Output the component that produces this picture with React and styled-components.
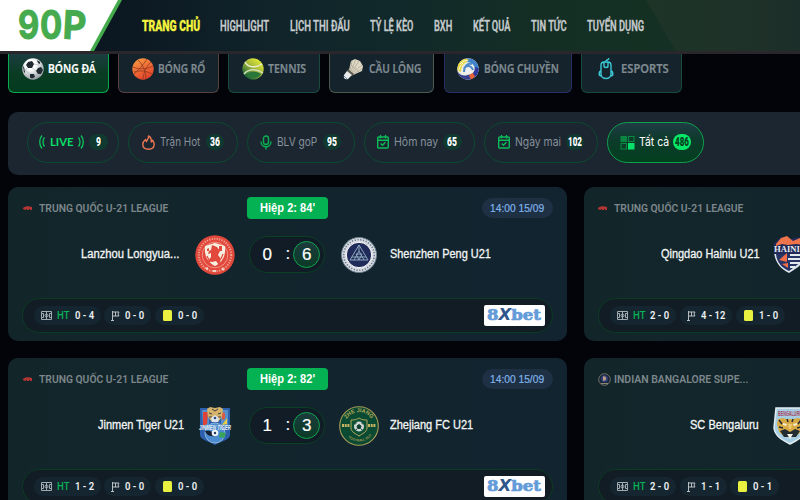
import React, { useLayoutEffect, useRef } from 'react'
import styled, { createGlobalStyle } from 'styled-components'

const GlobalStyle = createGlobalStyle`
    * { box-sizing: border-box; }
    html, body { margin: 0; background: #03040a; }
    body { font-family: "Liberation Sans", Arial, sans-serif; }
    svg { display: block; flex: none; }
`

const Page = styled.div`
    width: 800px;
    height: 500px;
    overflow: hidden;
`

const NAV = [
    ['TRANG CHỦ', 58], ['HIGHLIGHT', 49], ['LỊCH THI ĐẤU', 60], ['TỶ LỆ KÈO', 43.5],
    ['BXH', 18.5], ['KẾT QUẢ', 37.5], ['TIN TỨC', 35.5], ['TUYỂN DỤNG', 57.5]]

// Squeezes a label horizontally to the given width
const Fit = ({ w, children }) => {
    const ref = useRef(null)
    useLayoutEffect(() => {
        ref.current.style.transform = `scaleX(${w / ref.current.offsetWidth})`
    }, [w, children])
    return <FitBox $w={w}><FitText ref={ref}>{children}</FitText></FitBox>
}

const FitBox = styled.span`
    display: block;
    flex: none;
    width: ${(p) => p.$w}px;
    white-space: nowrap;
`

const FitText = styled.span`
    display: inline-block;
    transform-origin: 0 50%;
`

/* ---------- header ---------- */

const Header = styled.header`
    display: flex;
    height: 54px;
    border-bottom: 3px solid #29272b;
    background: linear-gradient(90deg, #0b1620 100px, #10242a 270px, #11292a 400px, #142e24 540px, #143023 640px, #182e26 800px);
    position: relative;
    overflow: hidden;
`

const Slant = styled.div`
    position: absolute;
    inset: 0 0 0 646px;
    background: linear-gradient(90deg, #1d3427, #1f3229 60%, #1c2e29);
    clip-path: polygon(0 0, 100% 0, 100% 100%, 30px 100%);
`

const LogoEdge = styled.div`
    width: 122px;
    height: 51px;
    flex: none;
    background: #43ab4b;
    clip-path: polygon(0 0, 100% 0, 94px 100%, 0 100%);
`

const Logo = styled.div`
    width: 118px;
    height: 51px;
    padding-left: 18px;
    background: #fff;
    clip-path: polygon(0 0, 100% 0, 90px 100%, 0 100%);
    color: #46ab4e;
    display: flex;
    gap: 1px;
    font: 700 39px/50px Inter, sans-serif;
    -webkit-text-stroke: 1px #46ab4e;
`

const LogoP = styled.span`
    transform: rotate(3deg);
`

const Nav = styled.nav`
    display: flex;
    gap: 20.4px;
    padding-left: 20px;
    font: 600 15px/52px Roboto, sans-serif;
    color: #c6cbcd;
    -webkit-text-stroke: 0.3px currentColor;
    z-index: 1;
`

const NavItem = styled.a`
    color: ${(p) => p.$active ? '#f4f33e' : 'inherit'};
    font-weight: ${(p) => p.$active ? 900 : 600};
`

/* ---------- sports ---------- */

const Sports = styled.div`
    display: flex;
    gap: 9.2px;
    height: 39px;
    padding-left: 8.4px;
`

const SportCard = styled.div`
    width: ${(p) => p.$w}px;
    height: 39px;
    flex: none;
    display: flex;
    align-items: center;
    gap: 4.5px;
    padding: 0 0 9px 12.5px;
    border: 1px solid ${(p) => p.$line};
    border-top: 0;
    border-radius: 0 0 6px 6px;
    background: ${(p) => p.$active ? 'linear-gradient(#1c3c40, #0a3c24 50%, #033b1d)' : '#15232d'};
    color: ${(p) => p.$active ? '#fff' : '#7f8b91'};
    font: 600 12px/16px "Noto Sans", sans-serif;
    -webkit-text-stroke: 0.2px currentColor;
`

const Soccer = () => (
    <svg width="22" height="22" viewBox="0 0 22 22">
        <defs><radialGradient id="sg" cx=".4" cy=".3" r=".75"><stop offset=".3" stopColor="#fff" /><stop offset="1" stopColor="#8b949b" /></radialGradient></defs>
        <circle cx="11" cy="11" r="10.7" fill="url(#sg)" />
        <path d="M6 4l4-1 2 3-2 4-4 0-2-3zM1 8l1 1 1 5-1 1zM16 10l3-1 2 3-2 4-3 0-2-3zM15 2l3 2 0 2-2-1zM8 16l4 0 1 3-3 1.500-2-1z" fill="#202a30" />
        <path d="M10 10l4 3M5 10l-2 3M12 6l5 1M8 16l-4-3M13 19l4-3" stroke="#aab2b8" strokeWidth=".6" />
    </svg>
)

const Basket = () => (
    <svg width="22" height="22" viewBox="0 0 22 22">
        <defs><linearGradient id="bg" x2=".5" y2="1"><stop stopColor="#f9a044" /><stop offset="1" stopColor="#e5452b" /></linearGradient></defs>
        <circle cx="11" cy="11" r="10.7" fill="url(#bg)" />
        <path d="M1 9c7 3 14 2 20-1M6 2c5 5 8 11 8 19M15 1c-4 6-8 11-13 15M19 4c-5 5-7 9-8 17M2 14c6-2 13-1 18 2" stroke="#8f3a22" strokeWidth=".8" fill="none" />
    </svg>
)

const Tennis = () => (
    <svg width="22" height="22" viewBox="0 0 22 22">
        <defs><linearGradient id="tg" x1=".85" x2=".15" y2=".9"><stop stopColor="#eef436" /><stop offset=".45" stopColor="#a9bb3b" /><stop offset="1" stopColor="#0e5c35" /></linearGradient></defs>
        <circle cx="11" cy="11" r="10.7" fill="url(#tg)" />
        <path d="M3 4c3 6 11 6 17 2" stroke="#e8ecd0" strokeWidth="1.500" fill="none" />
        <path d="M2 16c5-6 13-5 19-1" stroke="#d5dfb8" strokeWidth="1.500" fill="none" />
        <path d="M5 16c4-3 9-3 14 0-3 5-10 5-14 0z" fill="#287638" />
    </svg>
)

const Shuttle = () => (
    <svg width="22" height="22" viewBox="0 0 22 22">
        <path d="M7 12L9 3l4-2 5 2 3 5-1 5-9 4z" fill="#ded8c4" />
        <path d="M8 13L10 3M9 13l5-12M10 14l7-11M10 15l10-8M11 16l9-5M9 7l8 7" stroke="#a39b87" strokeWidth=".6" />
        <path d="M6 11l6 5-2 2-5-5z" fill="#5b5a4e" />
        <path d="M5 13l5 4-4 4c-3 1-5-1-4-4z" fill="#e8ebe9" />
        <path d="M2 18c1 1 2 2 3 3" stroke="#668cae" />
    </svg>
)

const Volley = () => (
    <svg width="22" height="22" viewBox="0 0 22 22">
        <defs><clipPath id="vc"><circle cx="11" cy="11" r="10.7" /></clipPath></defs>
        <g clipPath="url(#vc)">
            <path d="M0 0h22v22H0z" fill="#eceee3" />
            <path d="M10 0c8 0 12 5 12 12l-4 1c0-6-3-9-9-9z" fill="#3f82cd" />
            <path d="M22 10c0 7-4 10-8 12l-4-5c5 0 8-3 8-8z" fill="#303a9c" />
            <path d="M1 14c3 4 6 4 10 3l3 5H6C2 20 0 17 0 14z" fill="#353e91" />
            <path d="M1 5c4-4 8-5 11-3L8 5C5 7 4 10 4 14L0 12z" fill="#e8d83b" />
            <path d="M3 6c3-3 5-4 8-3M2 12c0-3 2-5 4-7" stroke="#f6f4d8" fill="none" />
            <path d="M8 7c3-2 8 0 8 5l-5 4C7 15 6 10 8 7z" fill="#edf0ef" />
            <path d="M15 6c-5-1-8 2-8 8M16 12c-2-5-6-5-9-2" stroke="#4f89c8" strokeWidth="2" fill="none" />
            <path d="M12 17l4-2 2 4-4 3z" fill="#ec6431" />
        </g>
    </svg>
)

const Mouse = () => (
    <svg width="22" height="22" viewBox="0 0 22 22" fill="none" stroke="#3cc9d6" strokeWidth="1.400">
        <path d="M11 4.500V3c0-1.500 2.500-.5 3-2.800M9 4h4c2 0 3 1.500 3 3.500V16c0 6-10 6-10 0V7.500C6 5.500 7 4 9 4zM9 4.500V8c0 2 4 2 4 0V4.500M6 13c-1.500 0-1.800 1-1.800 3 0 1.500.8 2 2.300 2M16 13c1.500 0 1.800 1 1.800 3 0 1.500-.8 2-2.300 2" />
    </svg>
)

/* ---------- filters ---------- */

const Filters = styled.div`
    display: flex;
    gap: 9px;
    width: 820px;
    height: 62.500px;
    margin: 19px 0 0 8.4px;
    padding: 9.5px 0 0 18.6px;
    border-radius: 10px;
    background: #1b2631;
`

const Pill = styled.div`
    width: ${(p) => p.$w}px;
    height: 41.5px;
    flex: none;
    display: flex;
    align-items: center;
    justify-content: center;
    gap: ${(p) => p.$active ? 4 : 5}px;
    border: 1px solid ${(p) => p.$active ? '#0fa24d' : '#0c4a2f'};
    border-radius: 21px;
    background: ${(p) => p.$active ? 'linear-gradient(#203b45, #0c3b2a 45%, #033f1f)' : 'transparent'};
    color: ${(p) => p.$active ? '#fff' : '#87919a'};
    font: 400 11.5px/16px Inter, sans-serif;
`

const LiveText = styled.span`
    color: #08df66;
    font: 700 12px/16px Lato, sans-serif;
`

const Count = styled.span`
    width: 18.500px;
    height: 16px;
    display: flex;
    justify-content: center;
    border-radius: 8px;
    background: ${(p) => p.$active ? '#05e868' : '#103a30'};
    color: ${(p) => p.$active ? '#06401f' : '#fff'};
    font: 900 12px/16px Roboto, sans-serif;
`

const Waves = ({ flip }) => (
    <svg width="6" height="14" viewBox="0 0 6 14" fill="none" stroke="#0bc75b" strokeWidth="1.300" transform={flip ? 'scale(-1 1)' : undefined}>
        <path d="M3 .5C0 4 0 10 3 13.500M5.500 2.500C3.500 5 3.500 9 5.500 11.500" />
    </svg>
)

const Flame = () => (
    <svg width="13" height="15" viewBox="0 0 13 15" fill="none" stroke="#ed7650" strokeWidth="1.400" strokeLinejoin="round">
        <path d="M6.500 1C7 4 5 4.500 4.500 6.500 4 6 3.500 5.500 3.500 4.500 1.500 6 .8 8 .8 9.500c0 3 2.500 4.700 5.700 4.700s5.700-1.700 5.700-4.900c0-1.800-.8-2.800-1.700-4.100-.2 1-.7 1.500-1.200 1.800C9.500 4.500 8.500 2 6.500 1z" />
    </svg>
)

const Mic = () => (
    <svg width="12" height="15" viewBox="0 0 12 15" fill="none" stroke="#0bae52" strokeWidth="1.400">
        <rect x="3.500" y="1" width="5" height="8.500" rx="2.500" />
        <path d="M1 6.500c0 7 10 7 10 0M6 11.500V14.500" />
    </svg>
)

const Cal = () => (
    <svg width="12" height="14" viewBox="0 0 12 14" fill="none" stroke="#0dba59" strokeWidth="1.400">
        <rect x=".7" y="2" width="10.600" height="11" rx="1" />
        <path d="M1 5.200h10M3.500 0v3.500M8.500 0v3.500M3.700 8.500l1.700 1.700 3-3" />
    </svg>
)

const Tiles = () => (
    <svg width="15" height="15" viewBox="0 0 15 15">
        <rect x=".5" y="1" width="6.500" height="6" fill="#0b8541" />
        <rect x="8.500" y="1.500" width="5.500" height="5" fill="none" stroke="#0a8b44" />
        <rect x="1" y="8.500" width="5.500" height="5.500" fill="none" stroke="#0a8b44" />
        <rect x="8" y="8" width="6.500" height="6.500" fill="#08e169" />
    </svg>
)

/* ---------- match cards ---------- */

const Matches = styled.main`
    display: grid;
    grid-template-columns: 558.3px 558.3px;
    gap: 17px;
    padding: 12.800px 0 0 8.4px;
`

const MatchCard = styled.section`
    height: 154px;
    display: flex;
    flex-direction: column;
    padding: 10px 14px 0;
    border-radius: 10px;
    background: linear-gradient(90deg, #12262a, #122430 100%);
`

const CardTop = styled.div`
    height: 22px;
    display: flex;
    align-items: center;
`

const League = styled.div`
    width: 225px;
    display: flex;
    align-items: center;
    gap: ${(p) => p.$gap}px;
    padding-top: 1px;
    color: #7d878b;
    font: 600 10.500px/14px Roboto, sans-serif;
`

const Period = styled.div`
    width: 81px;
    height: 22px;
    display: flex;
    justify-content: center;
    border-radius: 4px;
    background: #05b253;
    color: #fff;
    font: 700 12px/22px "Liberation Sans", sans-serif;
`

const Kickoff = styled.div`
    width: 71px;
    height: 20px;
    display: flex;
    justify-content: center;
    margin-left: auto;
    border-radius: 10px;
    background: #1e3043;
    color: #80b3ea;
    font: 400 11px/21px "Liberation Sans", sans-serif;
    -webkit-text-stroke: 0.2px currentColor;
`

const Teams = styled.div`
    height: 40px;
    display: flex;
    align-items: center;
    margin-top: 15.500px;
    color: #f3f5f5;
    font: 400 12px/19px "Liberation Sans", sans-serif;
    -webkit-text-stroke: 0.3px currentColor;
    svg { -webkit-text-stroke: 0; }
`

const HomeName = styled.div`
    width: 172.800px;
    display: flex;
    justify-content: flex-end;
    padding-right: ${(p) => p.$pad}px;
`

const AwayName = styled.div`
    padding-left: 11px;
`

const Score = styled.div`
    width: 76px;
    height: 37px;
    display: flex;
    align-items: center;
    margin: 0 14px 0 14px;
    padding: 0 4px 0 8px;
    border: 1px solid #0b4025;
    border-radius: 19px;
    background: #111c26;
    color: #fff;
    font: 400 17px/26px "Liberation Sans", sans-serif;
    -webkit-text-stroke: 0.2px currentColor;
`

const Goals = styled.span`
    width: 18px;
    text-align: center;
`

const Colon = styled.span`
    text-align: right;
    margin-right: 3px;
    padding-bottom: 2px;
    flex: 1;
`

const Winner = styled.span`
    width: 27px;
    height: 27px;
    flex: none;
    border: 1px solid #0ea74f;
    border-radius: 50%;
    background: linear-gradient(#1b3c3c, #0b3b27);
    text-align: center;
    line-height: 26px;
`

const CardFoot = styled.div`
    height: 35px;
    display: flex;
    align-items: center;
    gap: 3.5px;
    margin-top: 23.300px;
    padding: 0 7px 0 11px;
    border: 1px solid #0c3b23;
    border-radius: 18px;
    background: #111c25;
`

const Chip = styled.div`
    height: 19.5px;
    display: flex;
    align-items: center;
    gap: 5px;
    padding: 0 7px;
    border-radius: 10px;
    background: #162631;
    color: #eef1f2;
    font: 600 10px/19px Roboto, sans-serif;
`

const HalfTime = styled.span`
    color: #08b354;
    font-weight: 500;
`

const YellowCard = styled.i`
    width: 9px;
    height: 11px;
    margin: 0 1px;
    border-radius: 1.500px;
    background: #eaf03f;
`

const Sponsor = styled.div`
    width: 61px;
    height: 21px;
    display: flex;
    justify-content: center;
    margin-left: auto;
    border-radius: 2px;
    background: #fff;
    color: #629bd8;
    font: 700 15px/21px "DejaVu Serif", serif;
    -webkit-text-stroke: 0.7px currentColor;
    b { color: #2f578b; font-family: "DejaVu Sans", sans-serif; font-style: italic; -webkit-text-stroke: 0; }
`

const Pitch = () => (
    <svg width="11" height="9" viewBox="0 0 11 9" fill="none" stroke="#a1aaae" strokeWidth="1">
        <path d="M.5.5h10v8H.5zM5.500.5v8M.5 2.500h2v4h-2M10.500 2.500h-2v4h2" /><circle cx="5.500" cy="4.500" r="1.500" />
    </svg>
)

const Flag = () => (
    <svg width="9" height="10" viewBox="0 0 9 10" fill="none" stroke="#b9c0c4" strokeWidth="1">
        <path d="M1.500 0v9M0 9.500h3M1.500 1H8L7 3l1 2H1.500M4.500 1v4" />
    </svg>
)

const ChinaMark = () => (
    <svg width="9" height="5" viewBox="0 0 9 5">
        <path d="M0 2c2-2 6-2 9-1v3H7V3H6v1H4V3L2 4 0 3z" fill="#b33634" />
    </svg>
)

const IndiaMark = () => (
    <svg width="13" height="13" viewBox="0 0 13 13">
        <circle cx="6.500" cy="6.500" r="5.800" fill="#17253b" stroke="#747064" strokeWidth="1" />
        <circle cx="6.500" cy="5.800" r="3.500" fill="#313f74" /><path d="M5 3l3 1 0 3-3 1z" fill="#b79b88" />
        <path d="M3 10.500h7" stroke="#8c8876" />
    </svg>
)

const Lanzhou = () => (
    <svg width="40" height="40" viewBox="0 0 40 40">
        <circle cx="20" cy="20" r="19.700" fill="#e2483b" />
        <circle cx="20" cy="20" r="16.200" fill="none" stroke="#efa493" strokeWidth="2" strokeDasharray="1.200 1.300" />
        <circle cx="20" cy="20" r="12.800" fill="#e2483b" stroke="#f2b3a4" strokeWidth=".7" />
        <path d="M10 11l10-3 10 3c1 9-2 16-10 20C12 27 9 20 10 11z" fill="#f5f0df" />
        <path d="M17 10l5 2 3 4-2 4 3 4-2 6-3-4-4 1-4-1 3-4 0-4-3 1 1-3 2-1zM24 11h3v5h-3zM12 14l2-1 0 3-2 0z" fill="#e2483b" />
        <path d="M12 21l3 6M28 19l-2 5" stroke="#e2483b" strokeWidth="1.200" fill="none" />
        <path d="M11 34l2-1M18 36h3M27 33l2 2" stroke="#f2d4c4" strokeWidth="2" />
    </svg>
)

const Shenzhen = () => (
    <svg width="40" height="40" viewBox="0 0 40 40">
        <circle cx="20" cy="20" r="17.500" fill="#d9dde1" stroke="#6c7e8d" />
        <circle cx="20" cy="20" r="15.300" fill="none" stroke="#6b7a92" strokeWidth="1.600" strokeDasharray="1.300 1.500" />
        <circle cx="20" cy="20" r="12.700" fill="#202b59" stroke="#fff" />
        <path d="M20 10l9 15H11zM20 10v6l-5 9M20 16l5 9M13 22h14M17 19l3 6 3-6z" fill="none" stroke="#8ba6bd" strokeWidth="1" />
    </svg>
)

const Jinmen = () => (
    <svg width="40" height="40" viewBox="0 0 40 40">
        <path d="M5 2h30v27c0 5-9 6-15 10C14 35 5 34 5 29z" fill="#2c60ad" />
        <path d="M7 4h7v18H8zM26 4h7v18l-7-3z" fill="#5590cc" />
        <path d="M8 6l5 0-1 12-4 2z" fill="#df4239" /><path d="M32 12l0 6-5 1z" fill="#e9ce3f" /><path d="M27 6l3 1 0 6-3 1z" fill="#d95a43" />
        <path d="M12 3l3-2 5 1 5-1 3 2-1 8-4 5h-6l-4-5z" fill="#d5b36a" />
        <path d="M14 7l3 1M26 7l-3 1M17 3l3 2 3-2M14 11l3 0M26 11l-3 0" stroke="#413d43" strokeWidth="1" fill="none" />
        <path d="M16 12l4-3 4 3-1 4h-6z" fill="#dfe6ee" /><circle cx="20" cy="12" r="1.300" fill="#314c7d" />
        <circle cx="20" cy="27" r="10" fill="#4b8cd0" stroke="#a5c4e0" strokeWidth=".8" />
        <path d="M10 25c6-1 9 2 12 5-5 1-10 0-12-5z" fill="#151e32" />
        <path d="M25 26l6 1-2 5-5-1z" fill="#39a35a" /><circle cx="20" cy="27" r="3.300" fill="#eef4fa" /><circle cx="20" cy="27" r="1.200" fill="#263a65" />
        <text x="4" y="24" textLength="32" lengthAdjust="spacingAndGlyphs" fill="#e9ecf0" fontFamily="Liberation Sans" fontSize="7.500" fontStyle="italic" fontWeight="700">JINMEN TIGER</text>
    </svg>
)

const Zhejiang = () => (
    <svg width="40" height="40" viewBox="0 0 40 40">
        <defs><path id="zt" d="M7 14C13 3.500 27 3.500 33 14" /><path id="zb" d="M7 28c5 10 21 10 26 0" /></defs>
        <circle cx="20" cy="20" r="19.300" fill="#0b4a32" stroke="#a99b58" strokeWidth="1.100" />
        <text fill="#b4a75a" fontFamily="Liberation Sans" fontSize="5.500" fontWeight="700"><textPath href="#zt" startOffset="1">ZHE JIANG</textPath></text>
        <text fill="#a79b56" fontFamily="Liberation Sans" fontSize="3.400" fontWeight="700"><textPath href="#zb" startOffset="4">FOOTBALL CLUB</textPath></text>
        <path d="M3 19.500h8M29 19.500h8" stroke="#c4b361" strokeWidth="3" strokeDasharray="2 .7" />
        <path d="M12 14c5 0 6-1 8-2 2 1 3 2 8 2v8c0 4-5 6-8 8-3-2-8-4-8-8z" fill="#0c5035" stroke="#b7aa5a" />
        <circle cx="20" cy="20.500" r="5" fill="#cfd8d4" />
        <path d="M20 18.500l2 1.500-.7 2.500h-2.600L18 20zM16 18.500l1.500-2M24 18.500l-1.500-2M16.500 24l1.500-1M23.500 24l-1.500-1" fill="#123f31" stroke="#123f31" />
    </svg>
)

const Qingdao = () => (
    <svg width="40" height="40" viewBox="0 0 40 40">
        <path d="M4 17l32 0c0 11-9 16-17 21C11 34 5 28 4 17z" fill="#dce4ed" />
        <path d="M4 8l7-6 9 2 9-2 7 7-1 10H4z" fill="#202957" />
        <path d="M6 9l5-6 6-2 6 5 7-3 4 7-8-1-8 1-6-1-6 2z" fill="#ee744b" />
        <path d="M6 19h27l-2 8-12 9C12 33 7 28 6 19z" fill="#253365" />
        <path d="M9 25l8-7v9zM12 29l6-1v5z" fill="#ef6d48" />
        <path d="M20 20h12M18 24h13M20 28h10M20 32h5" stroke="#e3e8ed" strokeWidth="2" />
        <text x="4" y="17" textLength="32" lengthAdjust="spacingAndGlyphs" fill="#e8edf1" fontFamily="Liberation Serif" fontSize="9" fontWeight="700">HAINIU</text>
    </svg>
)

const Bengaluru = () => (
    <svg width="40" height="40" viewBox="0 0 40 40">
        <path d="M6 2h28l2 20c-1 8-8 12-16 16C12 34 5 30 4 22z" fill="#a6cde2" stroke="#e2edf1" strokeWidth="1.500" />
        <text x="8" y="10" textLength="24" lengthAdjust="spacingAndGlyphs" fill="#a84361" fontFamily="Liberation Sans" fontSize="7" fontWeight="700">BENGALURU</text>
        <path d="M8 13l5-1 3 1h8l3-1 5 1 1 5-2 8-5 4H14l-5-4-2-8z" fill="#d8aa43" />
        <path d="M9 14l3 4M17 13l1 3M23 13l-1 3M31 14l-3 4M9 21l4 1M31 21l-4 1" stroke="#242c33" strokeWidth="1.500" />
        <path d="M10 25l5-2 5 3 5-3 5 2-4 6H14z" fill="#242c33" />
        <path d="M13 17l4 1-1 2-3-1zM27 17l-4 1 1 2 3-1z" fill="#f5f0d5" /><path d="M18 18h4l-1 5h-2z" fill="#edcb70" /><path d="M17 28h6l-3 5z" fill="#f1f1e8" />
    </svg>
)

const SPORTS = [
    { name: 'BÓNG ĐÁ', w: 47.5, box: 100.5, line: '#08a94f', Icon: Soccer, active: true },
    { name: 'BÓNG RỔ', w: 47.5, box: 101, line: '#57423e', Icon: Basket },
    { name: 'TENNIS', w: 38.5, box: 91.3, line: '#194c3e', Icon: Tennis },
    { name: 'CẦU LÔNG', w: 52.5, box: 105.7, line: '#4b5a4a', Icon: Shuttle },
    { name: 'BÓNG CHUYỀN', w: 75, box: 128.3, line: '#292f64', Icon: Volley },
    { name: 'ESPORTS', w: 47.5, box: 100.7, line: '#174b3c', Icon: Mouse }]

const FILTERS = [
    { name: 'Trận Hot', w: 40.5, box: 109.5, count: 36, Icon: Flame },
    { name: 'BLV goP', w: 40.5, box: 108, count: 95, Icon: Mic },
    { name: 'Hôm nay', w: 44, box: 111, count: 65, Icon: Cal },
    { name: 'Ngày mai', w: 46, box: 114, count: 102, Icon: Cal },
    { name: 'Tất cả', w: 30, box: 97, count: 486, Icon: Tiles, active: true }]

const MATCHES = [
    { league: 'TRUNG QUỐC U-21 LEAGUE', lw: 129.5, Mark: ChinaMark, time: "84'", home: 'Lanzhou Longyua...', hw: 98, pad: 16, Home: Lanzhou,
        score: [0, 6], away: 'Shenzhen Peng U21', aw: 101, Away: Shenzhen, ht: '0 - 4', corners: '0 - 0', cards: '0 - 0' },
    { league: 'TRUNG QUỐC U-21 LEAGUE', lw: 129.5, Mark: ChinaMark, home: 'Qingdao Hainiu U21', hw: 98.5, pad: 11, Home: Qingdao,
        ht: '2 - 0', corners: '4 - 12', cards: '1 - 0' },
    { league: 'TRUNG QUỐC U-21 LEAGUE', lw: 129.5, Mark: ChinaMark, time: "82'", home: 'Jinmen Tiger U21', hw: 86, pad: 11, Home: Jinmen,
        score: [1, 3], away: 'Zhejiang FC U21', aw: 83.500, Away: Zhejiang, ht: '1 - 2', corners: '0 - 0', cards: '0 - 0' },
    { league: 'INDIAN BANGALORE SUPE...', lw: 134, Mark: IndiaMark, home: 'SC Bengaluru', hw: 69, pad: 11, Home: Bengaluru,
        ht: '2 - 0', corners: '1 - 1', cards: '0 - 1' }]

const Match = ({ data }) => {
    const { Mark, Home, Away } = data
    return (
        <MatchCard>
            <CardTop>
                <League $gap={Mark === ChinaMark ? 7 : 3}>
                    {Mark === ChinaMark ? <MarkBox><Mark /></MarkBox> : <Mark />}
                    <Fit w={data.lw}>{data.league}</Fit>
                </League>
                {data.time && <Period><Fit w={55.500}>Hiệp 2: {data.time}</Fit></Period>}
                {data.time && <Kickoff><Fit w={54}>14:00 15/09</Fit></Kickoff>}
            </CardTop>
            <Teams>
                <HomeName $pad={data.pad}><Fit w={data.hw}>{data.home}</Fit></HomeName>
                <Home />
                {data.score && <>
                    <Score><Goals>{data.score[0]}</Goals><Colon>:</Colon><Winner>{data.score[1]}</Winner></Score>
                    <Away />
                    <AwayName><Fit w={data.aw}>{data.away}</Fit></AwayName>
                </>}
            </Teams>
            <CardFoot>
                <Chip><Pitch /><HalfTime><Fit w={12.500}>HT</Fit></HalfTime><Fit w={19}>{data.ht}</Fit></Chip>
                <Chip><Flag /><Fit w={data.corners.length > 5 ? 24.500 : 19}>{data.corners}</Fit></Chip>
                <Chip><YellowCard /><Fit w={19}>{data.cards}</Fit></Chip>
                {data.time && <Sponsor><Fit w={54}>8<b>X</b>bet</Fit></Sponsor>}
            </CardFoot>
        </MatchCard>
    )
}

const MarkBox = styled.span`
    padding-left: 0.500px;
`

const App = () => (
    <Page>
        <GlobalStyle />
        <Header>
            <Slant />
            <LogoEdge>
                <Logo><Fit w={21}>9</Fit><Fit w={22}>0</Fit><LogoP><Fit w={23}>P</Fit></LogoP></Logo>
            </LogoEdge>
            <Nav>
                {NAV.map(([name, w], i) => <NavItem key={name} $active={i === 0}><Fit w={w}>{name}</Fit></NavItem>)}
            </Nav>
        </Header>
        <Sports>
            {SPORTS.map(({ name, w, box, line, Icon, active }) => (
                <SportCard key={name} $w={box} $line={line} $active={active}><Icon /><Fit w={w}>{name}</Fit></SportCard>
            ))}
        </Sports>
        <Filters>
            <Pill $w={92.500}>
                <Waves /><LiveText><Fit w={23.500}>LIVE</Fit></LiveText><Waves flip />
                <Count><Fit w={5}>9</Fit></Count>
            </Pill>
            {FILTERS.map(({ name, w, box, count, Icon, active }) => (
                <Pill key={name} $w={box} $active={active}>
                    <Icon /><Fit w={w}>{name}</Fit>
                    <Count $active={active}><Fit w={count > 99 ? 14 : 10}>{count}</Fit></Count>
                </Pill>
            ))}
        </Filters>
        <Matches>
            {MATCHES.map((m) => <Match key={m.home} data={m} />)}
        </Matches>
    </Page>
)

export default App
